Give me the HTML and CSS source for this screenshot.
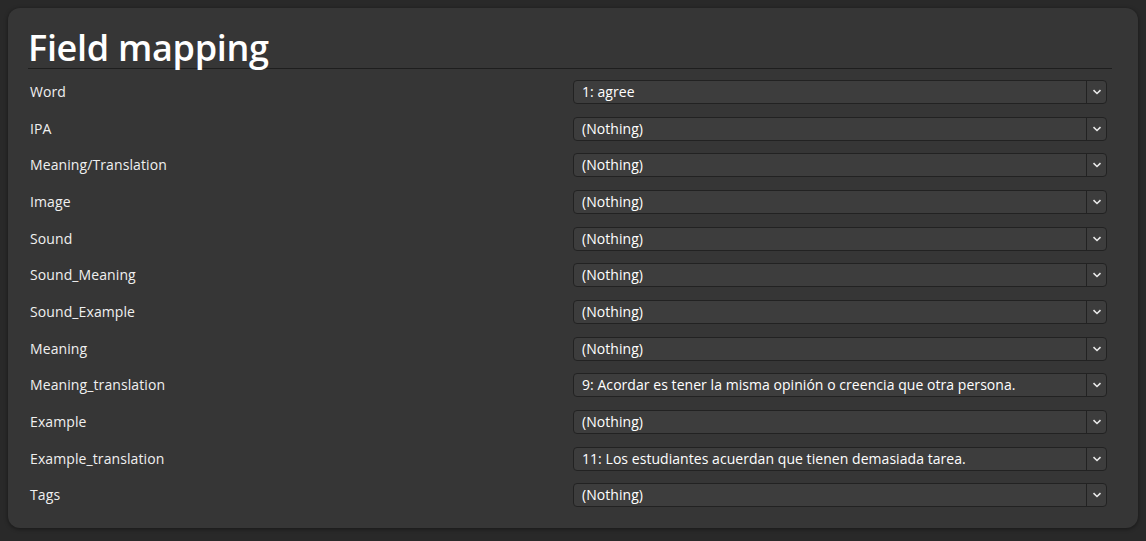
FILE: index.html
```html
<!DOCTYPE html>
<html>
<head>
<meta charset="utf-8">
<link rel="stylesheet" href="styles.css">
</head>
<body>
<div class="panel">
  <h1 class="title">Field mapping</h1>
  <div class="rows">
    <div class="label">Word</div><div class="select"><span class="value">1: agree</span><span class="arrow"><svg width="10" height="6" viewBox="0 0 10 6"><path d="M1.5 1.2 L5 4.5 L8.5 1.2" fill="none" stroke="#e8e8e8" stroke-width="1.6"/></svg></span></div>
    <div class="label">IPA</div><div class="select"><span class="value">(Nothing)</span><span class="arrow"><svg width="10" height="6" viewBox="0 0 10 6"><path d="M1.5 1.2 L5 4.5 L8.5 1.2" fill="none" stroke="#e8e8e8" stroke-width="1.6"/></svg></span></div>
    <div class="label">Meaning/Translation</div><div class="select"><span class="value">(Nothing)</span><span class="arrow"><svg width="10" height="6" viewBox="0 0 10 6"><path d="M1.5 1.2 L5 4.5 L8.5 1.2" fill="none" stroke="#e8e8e8" stroke-width="1.6"/></svg></span></div>
    <div class="label">Image</div><div class="select"><span class="value">(Nothing)</span><span class="arrow"><svg width="10" height="6" viewBox="0 0 10 6"><path d="M1.5 1.2 L5 4.5 L8.5 1.2" fill="none" stroke="#e8e8e8" stroke-width="1.6"/></svg></span></div>
    <div class="label">Sound</div><div class="select"><span class="value">(Nothing)</span><span class="arrow"><svg width="10" height="6" viewBox="0 0 10 6"><path d="M1.5 1.2 L5 4.5 L8.5 1.2" fill="none" stroke="#e8e8e8" stroke-width="1.6"/></svg></span></div>
    <div class="label">Sound_Meaning</div><div class="select"><span class="value">(Nothing)</span><span class="arrow"><svg width="10" height="6" viewBox="0 0 10 6"><path d="M1.5 1.2 L5 4.5 L8.5 1.2" fill="none" stroke="#e8e8e8" stroke-width="1.6"/></svg></span></div>
    <div class="label">Sound_Example</div><div class="select"><span class="value">(Nothing)</span><span class="arrow"><svg width="10" height="6" viewBox="0 0 10 6"><path d="M1.5 1.2 L5 4.5 L8.5 1.2" fill="none" stroke="#e8e8e8" stroke-width="1.6"/></svg></span></div>
    <div class="label">Meaning</div><div class="select"><span class="value">(Nothing)</span><span class="arrow"><svg width="10" height="6" viewBox="0 0 10 6"><path d="M1.5 1.2 L5 4.5 L8.5 1.2" fill="none" stroke="#e8e8e8" stroke-width="1.6"/></svg></span></div>
    <div class="label">Meaning_translation</div><div class="select"><span class="value">9: Acordar es tener la misma opinión o creencia que otra persona.</span><span class="arrow"><svg width="10" height="6" viewBox="0 0 10 6"><path d="M1.5 1.2 L5 4.5 L8.5 1.2" fill="none" stroke="#e8e8e8" stroke-width="1.6"/></svg></span></div>
    <div class="label">Example</div><div class="select"><span class="value">(Nothing)</span><span class="arrow"><svg width="10" height="6" viewBox="0 0 10 6"><path d="M1.5 1.2 L5 4.5 L8.5 1.2" fill="none" stroke="#e8e8e8" stroke-width="1.6"/></svg></span></div>
    <div class="label">Example_translation</div><div class="select"><span class="value">11: Los estudiantes acuerdan que tienen demasiada tarea.</span><span class="arrow"><svg width="10" height="6" viewBox="0 0 10 6"><path d="M1.5 1.2 L5 4.5 L8.5 1.2" fill="none" stroke="#e8e8e8" stroke-width="1.6"/></svg></span></div>
    <div class="label">Tags</div><div class="select"><span class="value">(Nothing)</span><span class="arrow"><svg width="10" height="6" viewBox="0 0 10 6"><path d="M1.5 1.2 L5 4.5 L8.5 1.2" fill="none" stroke="#e8e8e8" stroke-width="1.6"/></svg></span></div>
  </div>
</div>
</body>
</html>
```

FILE: styles.css
```css
html, body {
  margin: 0;
  padding: 0;
}
body {
  background: #292929;
  padding: 8px;
  font-family: "Open Sans", "Noto Sans", sans-serif;
  color: #f2f2f2;
}
.panel {
  box-sizing: border-box;
  width: 1130px;
  height: 520px;
  background: #363636;
  border-radius: 12px;
  box-shadow: 0 1px 4px rgba(0, 0, 0, 0.45);
  padding: 0 26px 0 20px;
}
.title {
  margin: 0;
  padding: 20px 0 0 0;
  height: 40px;
  font-size: 36px;
  line-height: 40px;
  font-weight: 600;
  color: #ffffff;
  border-bottom: 1px solid #1e1e1e;
  letter-spacing: -0.3px;
}
.rows {
  display: grid;
  grid-template-columns: 545px 534px;
  grid-auto-rows: 24px;
  row-gap: 12.67px;
  padding-top: 11px;
}
.label {
  padding-left: 2px;
  font-size: 14px;
  line-height: 23px;
  color: #f0f0f0;
  letter-spacing: 0.1px;
}
.select {
  box-sizing: border-box;
  display: flex;
  height: 24px;
  border: 1px solid #222222;
  border-radius: 4px;
  background: #3d3d3d;
}
.value {
  flex: 1;
  padding-left: 8px;
  font-size: 14px;
  line-height: 22px;
  color: #ffffff;
  white-space: nowrap;
  overflow: hidden;
  letter-spacing: 0.05px;
}
.arrow {
  width: 19px;
  border-left: 1px solid #222222;
  display: flex;
  align-items: center;
  justify-content: center;
}
.arrow svg {
  display: block;
}
```
